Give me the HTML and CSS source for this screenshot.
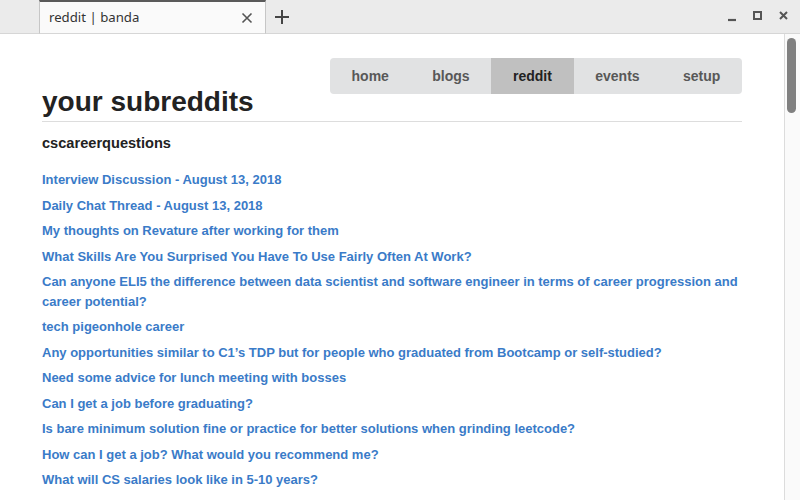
FILE: index.html
```html
<!DOCTYPE html>
<html>
<head>
<meta charset="utf-8">
<title>reddit | banda</title>
<link rel="stylesheet" href="styles.css">
</head>
<body>
<div class="window">
  <div class="titlebar">
    <div class="tab-spacer"></div>
    <div class="tab">
      <span class="tab-title">reddit | banda</span>
      <svg class="tab-close" width="12" height="12" viewBox="0 0 12 12"><path d="M1.5 1.5 L10.5 10.5 M10.5 1.5 L1.5 10.5" stroke="#555" stroke-width="1.6" fill="none"/></svg>
    </div>
    <svg class="newtab" width="16" height="16" viewBox="0 0 16 16"><path d="M8 1 V15 M1 8 H15" stroke="#444" stroke-width="2" fill="none"/></svg>
    <div class="titlebar-fill"></div>
    <div class="controls">
      <svg width="14" height="14" viewBox="0 0 14 14"><path d="M2 10 H10" stroke="#555" stroke-width="2.2" fill="none"/></svg>
      <svg width="14" height="14" viewBox="0 0 14 14"><rect x="2" y="2" width="7" height="7" stroke="#555" stroke-width="2" fill="none"/></svg>
      <svg width="14" height="14" viewBox="0 0 14 14"><path d="M2 2 L9 9 M9 2 L2 9" stroke="#555" stroke-width="2" fill="none"/></svg>
    </div>
  </div>
  <div class="viewport">
    <div class="page">
      <div class="container">
        <header class="header">
          <nav class="nav">
            <a class="nav-item">home</a>
            <a class="nav-item">blogs</a>
            <a class="nav-item active">reddit</a>
            <a class="nav-item">events</a>
            <a class="nav-item">setup</a>
          </nav>
          <h1 class="title">your subreddits</h1>
        </header>
        <h2 class="sub">cscareerquestions</h2>
        <ul class="posts">
          <li><a>Interview Discussion - August 13, 2018</a></li>
          <li><a>Daily Chat Thread - August 13, 2018</a></li>
          <li><a>My thoughts on Revature after working for them</a></li>
          <li><a>What Skills Are You Surprised You Have To Use Fairly Often At Work?</a></li>
          <li><a>Can anyone ELI5 the difference between data scientist and software engineer in terms of career progression and career potential?</a></li>
          <li><a>tech pigeonhole career</a></li>
          <li><a>Any opportunities similar to C1’s TDP but for people who graduated from Bootcamp or self-studied?</a></li>
          <li><a>Need some advice for lunch meeting with bosses</a></li>
          <li><a>Can I get a job before graduating?</a></li>
          <li><a>Is bare minimum solution fine or practice for better solutions when grinding leetcode?</a></li>
          <li><a>How can I get a job? What would you recommend me?</a></li>
          <li><a>What will CS salaries look like in 5-10 years?</a></li>
        </ul>
      </div>
    </div>
    <div class="scrollbar"><div class="thumb"></div></div>
  </div>
</div>
</body>
</html>
```
FILE: styles.css
```css
* { box-sizing: border-box; }
html, body { margin: 0; padding: 0; }
body {
  width: 800px;
  height: 500px;
  overflow: hidden;
  background: #ffffff;
  font-family: "Liberation Sans", Arial, sans-serif;
}
.window { display: flex; flex-direction: column; height: 500px; }

.titlebar {
  height: 34px;
  flex: none;
  display: flex;
  align-items: stretch;
  background: #ebebeb;
  border-bottom: 1px solid #d6d6d6;
}
.tab-spacer { width: 39px; flex: none; }
.tab {
  width: 227px;
  flex: none;
  display: flex;
  align-items: center;
  justify-content: space-between;
  background: #fafafa;
  border-left: 1px solid #c6c6c6;
  border-right: 1px solid #c6c6c6;
  border-top: 2px solid #5a5a5a;
  padding: 0 12px 0 9px;
  margin-bottom: -1px;
  border-bottom: 1px solid #d6d6d6;
}
.tab-title {
  font-family: "Noto Sans", "DejaVu Sans", sans-serif;
  font-size: 13.2px;
  color: #333;
  padding-bottom: 1px;
}
.tab-close { display: block; }
.newtab { align-self: center; margin-left: 8px; display: block; }
.titlebar-fill { flex: 1; }
.controls {
  display: flex;
  align-items: center;
  gap: 12px;
  padding-right: 8px;
  padding-top: 1px;
}
.controls svg { display: block; }

.viewport { flex: 1; display: flex; min-height: 0; }
.page { width: 784px; flex: none; overflow: hidden; }
.scrollbar {
  width: 16px;
  flex: none;
  background: #fafafa;
  border-left: 1px solid #dcdcdc;
  padding: 4px 0 0 2px;
}
.thumb {
  width: 9px;
  height: 75px;
  border-radius: 5px;
  background: #808080;
}

.container { width: 700px; margin: 0 auto; padding-top: 24px; }

.header { display: grid; }
.nav {
  grid-area: 1 / 1;
  justify-self: end;
  align-self: start;
  display: flex;
  height: 36px;
  background: #e1e2e3;
  border-radius: 4px;
  overflow: hidden;
}
.nav-item {
  display: flex;
  align-items: center;
  padding: 0 21.7px;
  font-size: 14px;
  font-weight: bold;
  color: #585858;
}
.nav-item.active { background: #c0c0c0; color: #222; }
.title {
  grid-area: 1 / 1;
  align-self: end;
  margin: 0;
  padding: 27px 0 2px;
  font-size: 28px;
  line-height: 34px;
  font-weight: bold;
  color: #222;
  border-bottom: 1px solid #dddddd;
}
.sub {
  margin: 11px 0 0;
  font-size: 14.6px;
  line-height: 20px;
  font-weight: bold;
  color: #222;
}
.posts { list-style: none; margin: 17px 0 0; padding: 0; }
.posts li { margin-bottom: 6px; font-size: 13px; line-height: 19.5px; font-weight: bold; }
.posts a { color: #3a7bc8; }
```
